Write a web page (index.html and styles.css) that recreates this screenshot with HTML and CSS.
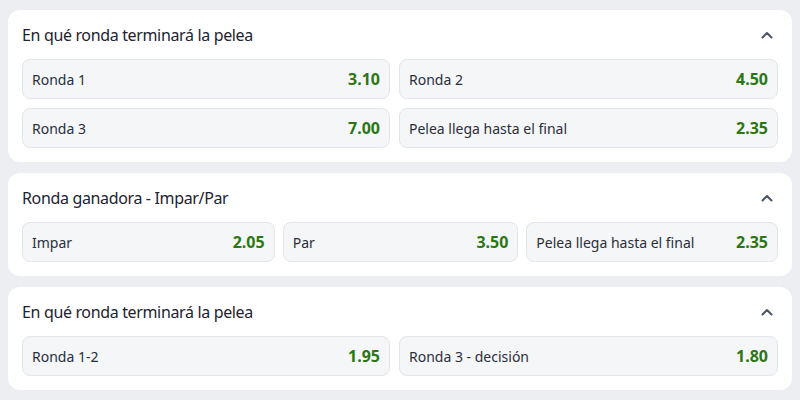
FILE: index.html
```html
<!DOCTYPE html>
<html lang="es">
<head>
<meta charset="utf-8">
<link rel="stylesheet" href="styles.css">
</head>
<body>
<main class="markets">
  <section class="market">
    <header class="market-head">
      <h2 class="market-title">En qué ronda terminará la pelea</h2>
      <svg class="chevron" width="12" height="8" viewBox="0 0 12 8"><path d="M1.5 6.5 L6 2 L10.5 6.5" fill="none" stroke="#4b5568" stroke-width="2" stroke-linecap="round" stroke-linejoin="round"/></svg>
    </header>
    <div class="odds odds-2">
      <button class="odd"><span class="odd-label">Ronda 1</span><span class="odd-value">3.10</span></button>
      <button class="odd"><span class="odd-label">Ronda 2</span><span class="odd-value">4.50</span></button>
      <button class="odd"><span class="odd-label">Ronda 3</span><span class="odd-value">7.00</span></button>
      <button class="odd"><span class="odd-label">Pelea llega hasta el final</span><span class="odd-value">2.35</span></button>
    </div>
  </section>
  <section class="market">
    <header class="market-head">
      <h2 class="market-title">Ronda ganadora - Impar/Par</h2>
      <svg class="chevron" width="12" height="8" viewBox="0 0 12 8"><path d="M1.5 6.5 L6 2 L10.5 6.5" fill="none" stroke="#4b5568" stroke-width="2" stroke-linecap="round" stroke-linejoin="round"/></svg>
    </header>
    <div class="odds odds-3">
      <button class="odd"><span class="odd-label">Impar</span><span class="odd-value">2.05</span></button>
      <button class="odd"><span class="odd-label">Par</span><span class="odd-value">3.50</span></button>
      <button class="odd"><span class="odd-label">Pelea llega hasta el final</span><span class="odd-value">2.35</span></button>
    </div>
  </section>
  <section class="market">
    <header class="market-head">
      <h2 class="market-title">En qué ronda terminará la pelea</h2>
      <svg class="chevron" width="12" height="8" viewBox="0 0 12 8"><path d="M1.5 6.5 L6 2 L10.5 6.5" fill="none" stroke="#4b5568" stroke-width="2" stroke-linecap="round" stroke-linejoin="round"/></svg>
    </header>
    <div class="odds odds-2">
      <button class="odd"><span class="odd-label">Ronda 1-2</span><span class="odd-value">1.95</span></button>
      <button class="odd"><span class="odd-label">Ronda 3 - decisión</span><span class="odd-value">1.80</span></button>
    </div>
  </section>
</main>
</body>
</html>
```

FILE: styles.css
```css
html, body {
  margin: 0;
  padding: 0;
  background: #eceef1;
  font-family: "Noto Sans", "Open Sans", sans-serif;
}
.markets {
  display: flex;
  flex-direction: column;
  gap: 11px;
  padding: 10px 8px;
}
.market {
  background: #ffffff;
  border-radius: 12px;
  padding: 0 14px 14px;
}
.market-head {
  display: flex;
  align-items: center;
  justify-content: space-between;
  height: 49px;
}
.market-title {
  margin: 0;
  font-size: 16px;
  font-weight: 400;
  color: #1d2330;
  letter-spacing: -0.35px;
}
.chevron {
  margin-right: 5px;
  display: block;
}
.odds {
  display: grid;
  gap: 9px;
}
.odds-2 {
  grid-template-columns: 368fr 379fr;
}
.odds-3 {
  gap: 8px;
  grid-template-columns: 253fr 236fr 252fr;
}
.odd {
  display: flex;
  align-items: center;
  justify-content: space-between;
  height: 40px;
  padding: 0 9px 0 9px;
  background: #f5f6f8;
  border: 1px solid #e3e5ea;
  border-radius: 8px;
  font-family: inherit;
  cursor: pointer;
  min-width: 0;
}
.odd-label {
  font-size: 14px;
  color: #2a2f3a;
}
.odd-value {
  font-size: 16px;
  font-weight: 700;
  color: #2c7613;
}
```
